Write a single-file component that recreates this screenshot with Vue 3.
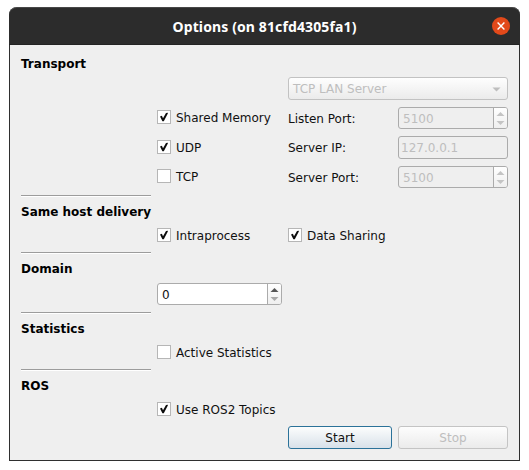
<script setup>
import { ref, h } from 'vue'

const shm = ref(true)
const udp = ref(true)
const tcp = ref(false)
const intra = ref(true)
const sharing = ref(true)
const stats = ref(false)
const ros = ref(true)

// Checkbox with a hand-drawn tick
const CheckItem = (props, { slots, emit }) =>
  h('label', { class: 'check', onClick: () => emit('update:modelValue', !props.modelValue) }, [
    h('span', { class: 'box' }, props.modelValue
      ? [h('svg', { width: 12, height: 12, viewBox: '0 0 12 12' }, [
          h('path', { d: 'M2 5.6 L3.9 4.8 L5 7.2 L8 2 L10 1.8 L9.7 2.8 L5.8 10.2 L4.4 10.2 Z', fill: '#0c0c0c' })
        ])]
      : []),
    h('span', { class: 'caption' }, slots.default())
  ])
CheckItem.props = ['modelValue']
CheckItem.emits = ['update:modelValue']

const SpinField = (props) =>
  h('div', { class: ['spin', { off: props.disabled }] }, [
    h('span', { class: 'value' }, String(props.value)),
    h('span', { class: 'steps' }, [
      h('svg', { width: 13, height: 20, viewBox: '0 0 13 20' }, [
        h('path', { class: 'up', d: 'M2.5 8 L6.5 4 L10.5 8 Z' }),
        h('path', { class: 'down', d: 'M2.5 13 L6.5 17 L10.5 13 Z' })
      ])
    ])
  ])
SpinField.props = ['value', 'disabled']
</script>

<template>
  <main class="screen">
    <section class="window">
      <header class="titlebar">
        <h1>Options (on 81cfd4305fa1)</h1>
        <button class="close" aria-label="Close">
          <svg width="18" height="18" viewBox="0 0 18 18">
            <path d="M5.6 5.6 L12.4 12.4 M12.4 5.6 L5.6 12.4" stroke="#fff" stroke-width="1.4" />
          </svg>
        </button>
      </header>
      <div class="form">
        <h2>Transport</h2>
        <div class="combo wide">
          <span>TCP LAN Server</span>
          <svg width="9" height="5" viewBox="0 0 9 5"><path d="M0.5 0.5 L8.5 0.5 L4.5 4.5 Z" fill="#bebebe" /></svg>
        </div>

        <CheckItem v-model="shm" class="c2 raised">Shared Memory</CheckItem>
        <span class="c3 text">Listen Port:</span>
        <SpinField :value="5100" :disabled="true" />

        <CheckItem v-model="udp" class="c2 nudged">UDP</CheckItem>
        <span class="c3 text">Server IP:</span>
        <div class="line-edit">127.0.0.1</div>

        <CheckItem v-model="tcp" class="c2 raised">TCP</CheckItem>
        <span class="c3 text">Server Port:</span>
        <SpinField :value="5100" :disabled="true" />

        <hr />
        <h2>Same host delivery</h2>
        <CheckItem v-model="intra" class="c2">Intraprocess</CheckItem>
        <CheckItem v-model="sharing" class="c3">Data Sharing</CheckItem>

        <hr />
        <h2>Domain</h2>
        <SpinField :value="0" :disabled="false" class="c2" />

        <hr />
        <h2>Statistics</h2>
        <CheckItem v-model="stats" class="c2">Active Statistics</CheckItem>

        <hr />
        <h2>ROS</h2>
        <CheckItem v-model="ros" class="c2">Use ROS2 Topics</CheckItem>

        <button class="btn start">Start</button>
        <button class="btn stop" disabled>Stop</button>
      </div>
    </section>
  </main>
</template>

<style>
body { background: #fff; }
</style>

<style scoped>
.screen {
  box-sizing: border-box;
  width: 529px;
  height: 470px;
  padding: 7px 9px;
  font: 12px/15px "DejaVu Sans", sans-serif;
  color: #111;
}
.window {
  box-sizing: border-box;
  width: 511px;
  height: 454px;
  background: #efefef;
  border: 1px solid #2f2f2f;
  border-top: 0;
  border-radius: 8px 8px 0 0;
}
.titlebar {
  box-sizing: border-box;
  height: 38px;
  margin: 0 -1px;
  padding: 0 10px;
  display: grid;
  grid-template-columns: 18px 1fr 18px;
  align-items: center;
  background: #2c2c2c;
  border-top: 1px solid #474747;
  border-bottom: 1px solid #232323;
  border-radius: 8px 8px 0 0;
}
.titlebar h1 {
  grid-column: 2;
  margin: 0;
  padding-top: 1px;
  text-align: center;
  font: bold 14px/20px "Noto Sans", sans-serif;
  letter-spacing: 0.12px;
  color: #fff;
  white-space: nowrap;
}
.close {
  width: 18px;
  height: 18px;
  padding: 0;
  border: 0;
  border-radius: 50%;
  background: #e2491a;
}
.close svg { display: block; }
.form {
  display: grid;
  grid-template-columns: 130px 125px 104px 110px;
  grid-template-rows: 15px 23px 24px 23px 24px 2px 15px 22px 2px 15px 25px 2px 15px 22px 2px 15px 22px 23px;
  gap: 6px;
  padding: 11px;
  align-items: center;
}
.form h2 {
  grid-column: 1 / -1;
  margin: 0;
  padding-top: 1px;
  align-self: start;
  font-size: 12px;
  line-height: 15px;
  color: #000;
  white-space: nowrap;
}
.form hr + h2 { padding-top: 2px; }
.form hr {
  box-sizing: border-box;
  grid-column: 1 / -1;
  justify-self: start;
  width: 130px;
  height: 2px;
  margin: 0;
  border: 0;
  border-top: 1px solid #9c9c9c;
  border-bottom: 1px solid #fff;
}
.c2 { grid-column: 2; }
.c3 { grid-column: 3; }
.wide { grid-column: 3 / 5; }
.text {
  padding-top: 2px;
  white-space: nowrap;
}
:deep(.check) {
  display: flex;
  align-items: center;
  gap: 5px;
  height: 14px;
  white-space: nowrap;
}
.raised { margin-bottom: 2px; }
.nudged { margin-bottom: 1px; }
:deep(.caption) { padding-top: 3px; }
:deep(.box) {
  box-sizing: border-box;
  width: 14px;
  height: 14px;
  background: #fff;
  border: 1px solid #b6b6b6;
}
:deep(.box svg) { display: block; }
.combo {
  box-sizing: border-box;
  height: 23px;
  display: flex;
  align-items: center;
  justify-content: space-between;
  padding: 1px 6px 0 4px;
  color: #bebebe;
  border: 1px solid #c2c2c2;
  border-radius: 3px;
  background: linear-gradient(#fefefe, #ebebeb);
}
.line-edit {
  box-sizing: border-box;
  height: 23px;
  padding: 4px 2px 2px;
  color: #bebebe;
  border: 1px solid #ababab;
  border-radius: 3px;
}
:deep(.spin) {
  box-sizing: border-box;
  height: 22px;
  display: flex;
  border: 1px solid #ababab;
  border-radius: 3px;
  background: #fff;
  overflow: hidden;
}
:deep(.spin .value) {
  flex: 1;
  padding: 4px 4px 1px;
}
:deep(.spin .steps) {
  width: 13px;
  border-left: 1px solid #ababab;
  background: linear-gradient(#fff, #efefef);
}
:deep(.steps svg) { display: block; }
:deep(.up) { fill: #555; }
:deep(.down) { fill: #a9a9a9; }
:deep(.spin.off) {
  background: #efefef;
  color: #bebebe;
}
:deep(.off .up),
:deep(.off .down) { fill: #c4c4c4; }
.btn {
  box-sizing: border-box;
  grid-row: 18;
  height: 23px;
  padding: 1px 0 0;
  font: inherit;
  border-radius: 3px;
}
.start {
  grid-column: 3;
  color: #111;
  border: 1px solid #2b7299;
  background: linear-gradient(#fcfdfd, #d8e1e9);
}
.stop {
  grid-column: 4;
  color: #bebebe;
  border: 1px solid #c4c4c4;
  background: linear-gradient(#fdfdfd, #ebebeb);
}
</style>
